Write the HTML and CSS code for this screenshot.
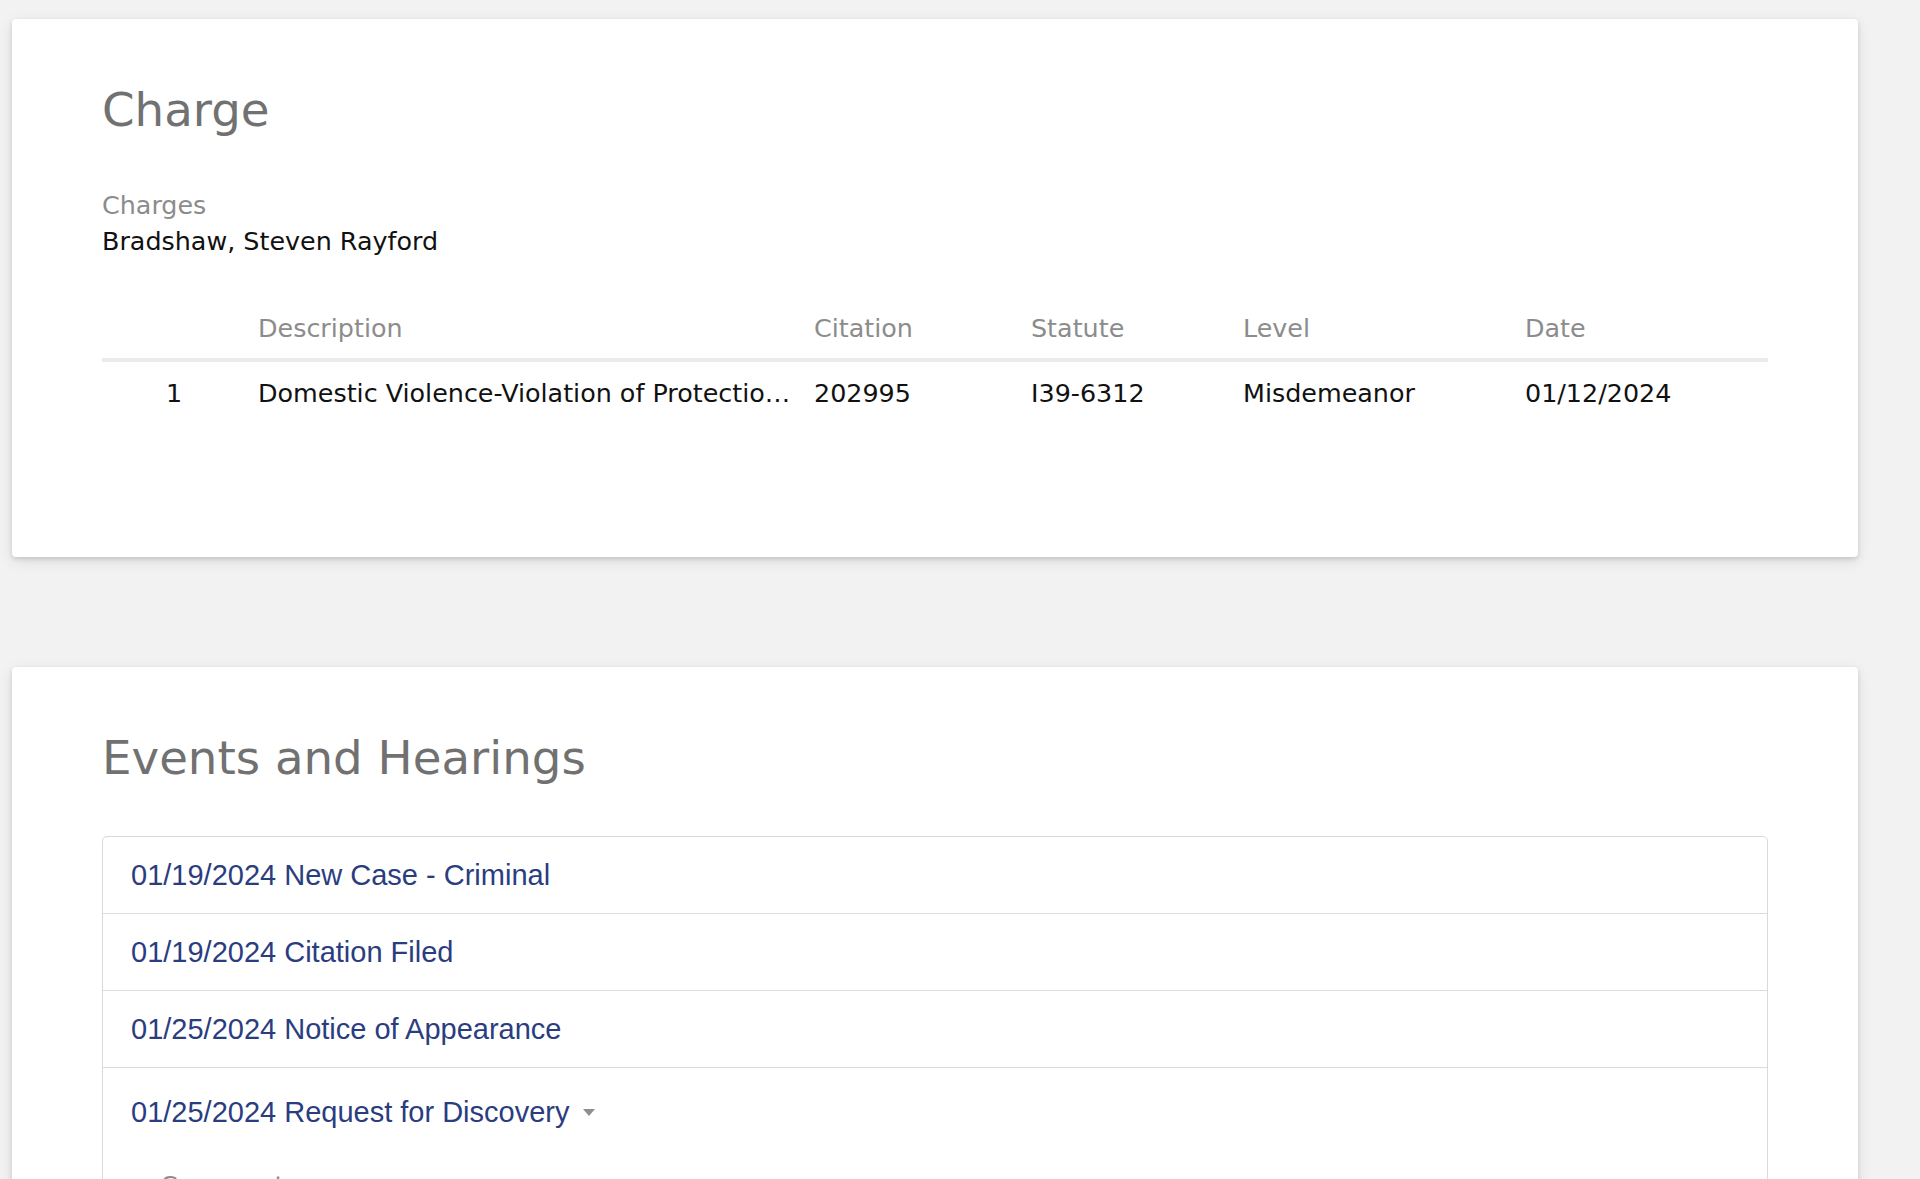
FILE: index.html
```html
<!DOCTYPE html>
<html lang="en">
<head>
    <meta charset="UTF-8">
    <meta name="viewport" content="width=device-width, initial-scale=1.0">
    <title>Case Detail - Charges and Events</title>
    <link rel="stylesheet" href="styles.css">
</head>
<body>
    <div class="page">
        <section class="card">
            <h2 class="card-title">Charge</h2>

            <div class="field">
                <div class="field-label">Charges</div>
                <div class="field-value">Bradshaw, Steven Rayford</div>
            </div>

            <table class="charges">
                <colgroup>
                    <col class="col-num">
                    <col class="col-desc">
                    <col class="col-citation">
                    <col class="col-statute">
                    <col class="col-level">
                    <col>
                </colgroup>
                <thead>
                    <tr>
                        <th class="num"></th>
                        <th>Description</th>
                        <th>Citation</th>
                        <th>Statute</th>
                        <th>Level</th>
                        <th>Date</th>
                    </tr>
                </thead>
                <tbody>
                    <tr>
                        <td class="num">1</td>
                        <td class="desc">Domestic Violence-Violation of Protection Order</td>
                        <td>202995</td>
                        <td>I39-6312</td>
                        <td>Misdemeanor</td>
                        <td>01/12/2024</td>
                    </tr>
                </tbody>
            </table>
        </section>

        <section class="card">
            <h2 class="card-title">Events and Hearings</h2>

            <div class="event-list">
                <div class="event">
                    <a href="#" class="event-link">01/19/2024 New Case - Criminal</a>
                </div>
                <div class="event">
                    <a href="#" class="event-link">01/19/2024 Citation Filed</a>
                </div>
                <div class="event">
                    <a href="#" class="event-link">01/25/2024 Notice of Appearance</a>
                </div>
                <div class="event open">
                    <a href="#" class="event-link">01/25/2024 Request for Discovery<span class="caret"></span></a>
                    <div class="event-body">
                        <div class="field-label">Comments</div>
                        <div class="field-value">Request for Discovery filed by defense counsel</div>
                    </div>
                </div>
            </div>
        </section>
    </div>
</body>
</html>
```

FILE: styles.css
```css
html, body {
    margin: 0;
    padding: 0;
    background: #f2f2f2;
    font-family: "DejaVu Sans", Verdana, sans-serif;
    font-size: 25.4px;
    line-height: 34px;
    color: #111;
}

.page {
    padding: 19px 62px 0 12px;
}

.card {
    background: #fff;
    border-radius: 4px;
    box-shadow: 0 2px 4px rgba(0, 0, 0, 0.12), 0 4px 14px rgba(0, 0, 0, 0.1);
    padding: 63px 90px 113px 90px;
    margin-bottom: 110px;
}

.card-title {
    margin: 0 0 50px;
    font-size: 46.7px;
    line-height: 56px;
    font-weight: normal;
    color: #717171;
}

.field-label {
    color: #8c8c8c;
}

.field-value {
    color: #111;
}

.field .field-value {
    margin-top: 2px;
}

/* charges table */
.charges {
    width: 100%;
    margin-top: 53px;
    table-layout: fixed;
    border-collapse: separate;
    border-spacing: 0;
}

.col-num { width: 139px; }
.col-desc { width: 556px; }
.col-citation { width: 217px; }
.col-statute { width: 212px; }
.col-level { width: 282px; }

.charges th {
    font-weight: normal;
    color: #8c8c8c;
    text-align: left;
    padding: 0 5px 13px 17px;
    border-bottom: 4px solid #ebebeb;
}

.charges td {
    padding: 14px 5px 34px 17px;
    color: #111;
}

.charges .num {
    text-align: center;
    padding-left: 5px;
    padding-right: 0;
}

.charges .desc {
    padding-right: 0;
    white-space: nowrap;
    overflow: hidden;
    text-overflow: ellipsis;
}

/* events list */
.event-list {
    border: 1px solid #d9d9d9;
    border-radius: 5px;
}

.event {
    padding: 22px 28px;
    border-top: 1px solid #dcdcdc;
    font-family: "Liberation Sans", Helvetica, Arial, sans-serif;
    font-size: 29px;
    line-height: 32px;
}

.event:first-child {
    border-top: none;
}

.event.open {
    padding-top: 28px;
}

.event-link {
    color: #2a3d80;
    text-decoration: none;
}

.caret {
    display: inline-block;
    width: 0;
    height: 0;
    margin-left: 14px;
    border-left: 6.5px solid transparent;
    border-right: 6.5px solid transparent;
    border-top: 7px solid #8f8f8f;
    vertical-align: 6px;
}

.event-body {
    margin-top: 40px;
    padding-left: 29px;
    font-family: "DejaVu Sans", Verdana, sans-serif;
    font-size: 25.4px;
    line-height: 34px;
}
```
